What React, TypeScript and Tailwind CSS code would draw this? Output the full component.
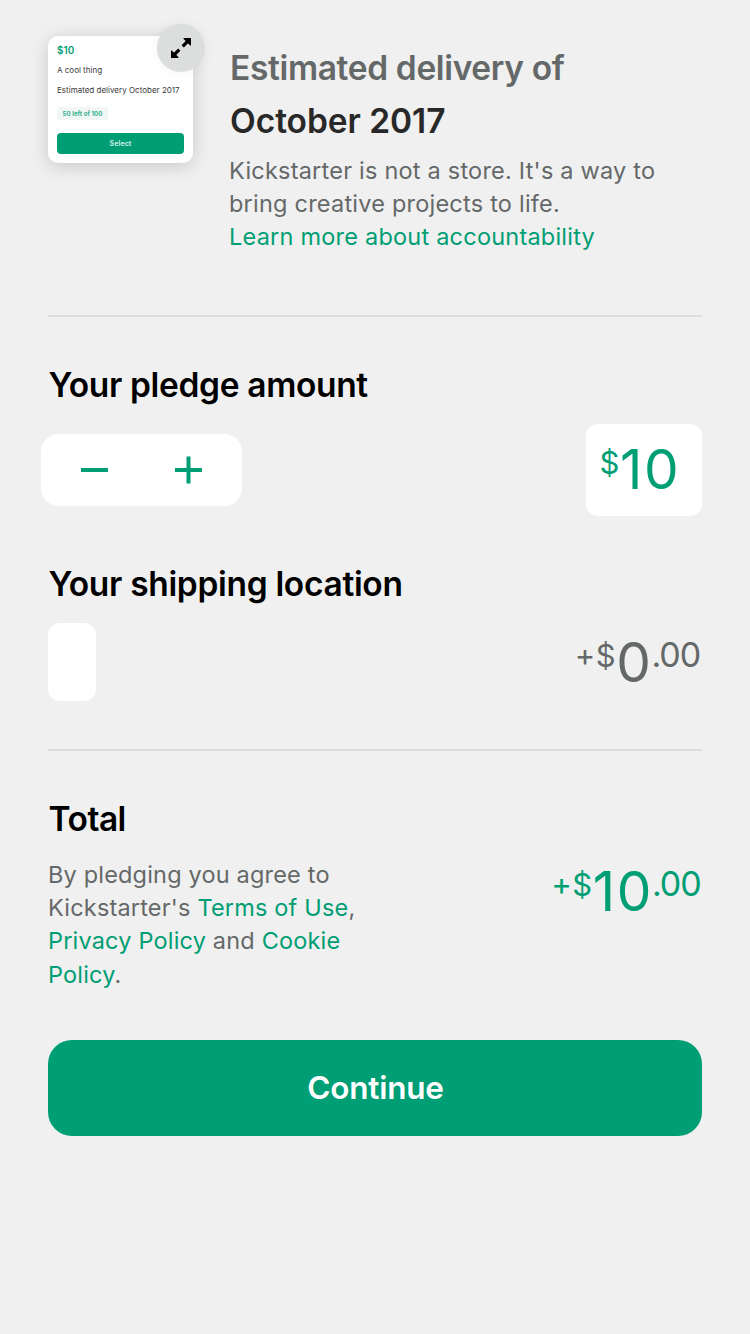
import type { ReactNode } from 'react';

function RewardThumbnail() {
  return (
    <div className="relative h-[127px] w-[145px] shrink-0 rounded-[10px] bg-white px-[9px] shadow-[0_3px_18px_rgba(0,0,0,0.17)]">
      <div className="flex flex-col items-start whitespace-nowrap text-[#3a3a3a]">
        <div className="mt-[9px] h-3 text-[9.8px] leading-3 font-semibold tracking-[0.1px] text-[#009e74]">$10</div>
        <div className="mt-[7px] h-3 text-[8px] leading-3">A cool thing</div>
        <div className="mt-[8px] h-3 text-[8px] leading-3 tracking-[0.01px]">Estimated delivery October 2017</div>
        <div className="mt-[11px] h-[13px] w-[51px] rounded-[2px] bg-[#f0f7f5] text-center text-[6px] leading-[13px] font-bold tracking-[0.1px] text-[#2db08c]">
          50 left of 100
        </div>
        <div className="mt-[13px] h-[21px] w-full rounded-[4px] bg-[#009e74] text-center text-[7px] leading-[21px] font-semibold tracking-[0.1px] text-[#d9f1ea]">
          Select
        </div>
      </div>
      <div className="absolute -top-3 -right-3 flex size-12 items-center justify-center rounded-full bg-[#dcdedd] shadow-[0_0_12px_rgba(0,0,0,0.05)]">
        <svg width="20" height="20" viewBox="0 0 20 20" fill="none">
          <path d="M12.2 0.6L13 0H20V7L19.4 7.8ZM0.6 12.2L0 13V20H7L7.8 19.4Z" fill="#000" />
          <path d="M17 3L11.7 8.3M8.3 11.7L3 17" stroke="#000" strokeWidth="3.2" />
        </svg>
      </div>
    </div>
  );
}

function Heading({ children, className = '' }: { children: ReactNode; className?: string }) {
  return (
    <h2 className={`h-10 pl-[0.5px] text-[33.5px] leading-10 font-semibold whitespace-nowrap text-black ${className}`}>
      {children}
    </h2>
  );
}

function Link({ children }: { children: ReactNode }) {
  return <a className="text-[#009e74]">{children}</a>;
}

function Amount({ sign, value, cents, className = '' }: { sign?: string; value: string; cents?: string; className?: string }) {
  return (
    <div className={`flex h-[60px] items-start whitespace-nowrap ${className}`}>
      {sign && <span className="text-[31px] leading-[46px]">{sign}</span>}
      <span className="w-[21px] text-center text-[31px] leading-[47px]">$</span>
      <span className="-mr-px text-[55px] leading-[60px] tracking-[1.6px]">{value}</span>
      {cents && <span className="text-[34px] leading-[45px] tracking-[-1.1px]">{cents}</span>}
    </div>
  );
}

export default function App() {
  return (
    <main className="flex h-[1334px] w-[750px] flex-col bg-[#f0f0f0] px-12 pt-9 font-['Inter',sans-serif]">
      <header className="flex h-[279px] gap-9">
        <RewardThumbnail />
        <div className="whitespace-nowrap">
          <div className="mt-[12px] h-10 pl-px text-[33.5px] leading-10 font-semibold tracking-[-0.35px] text-[#656868]">
            Estimated delivery of
          </div>
          <div className="mt-[13px] h-10 pl-px text-[33.5px] leading-10 font-semibold tracking-[-0.05px] text-[#282828]">
            October 2017
          </div>
          <p className="mt-[13px] text-[23.5px] leading-[33px] tracking-[0.22px] text-[#656868]">
            <span className="block">Kickstarter is not a store. It's a way to</span>
            <span className="block">bring creative projects to life.</span>
            <Link>Learn more about accountability</Link>
          </p>
        </div>
      </header>

      <hr className="h-[2px] border-0 bg-[#dcdedd]" />

      <section className="mt-[48px]">
        <Heading className="tracking-[-0.34px]">Your pledge amount</Heading>
        <div className="mt-[19px] flex h-[92px] items-center justify-between">
          <div className="-ml-[7px] flex h-[72px] w-[201px] items-center rounded-[18px] bg-white">
            <button className="flex flex-1 items-center justify-center pl-[7px]" aria-label="Decrease">
              <span className="h-1 w-[27px] bg-[#009e74]" />
            </button>
            <button className="flex flex-1 items-center justify-center pr-[7px]" aria-label="Increase">
              <svg width="27" height="28" viewBox="0 0 27 28" fill="#009e74">
                <path d="M0 12H27V16H0ZM11.5 0.5H15.5V27.5H11.5Z" />
              </svg>
            </button>
          </div>
          <div className="flex h-[92px] w-[116px] justify-start rounded-xl bg-white pt-[15px] pl-[13px]">
            <Amount value="10" className="text-[#009e74]" />
          </div>
        </div>
      </section>

      <section className="mt-12">
        <Heading className="tracking-[-0.32px]">Your shipping location</Heading>
        <div className="mt-[19px] flex h-[78px] justify-between">
          <div className="h-[78px] w-12 rounded-xl bg-white" />
          <Amount sign="+" value="0" cents=".00" className="mt-[9px] pr-[2px] text-[#656868]" />
        </div>
      </section>

      <hr className="mt-12 h-[2px] border-0 bg-[#dcdedd]" />

      <section className="mt-12">
        <Heading className="tracking-[-0.5px]">Total</Heading>
        <div className="mt-[19px] flex h-[134px] justify-between">
          <p className="text-[23.5px] leading-[33.2px] tracking-[0.18px] whitespace-nowrap text-[#656868]">
            <span className="block">By pledging you agree to</span>
            <span className="block">Kickstarter's <Link>Terms of Use</Link>,</span>
            <span className="block"><Link>Privacy Policy</Link> and <Link>Cookie</Link></span>
            <span className="block"><Link>Policy</Link>.</span>
          </p>
          <Amount sign="+" value="10" cents=".00" className="mt-[3px] pr-[1.5px] text-[#009e74]" />
        </div>
      </section>

      <button className="mt-[48px] h-24 w-full rounded-3xl bg-[#009e74] pb-px pl-px text-[31.5px] font-semibold tracking-[-0.2px] text-white">
        Continue
      </button>
    </main>
  );
}
